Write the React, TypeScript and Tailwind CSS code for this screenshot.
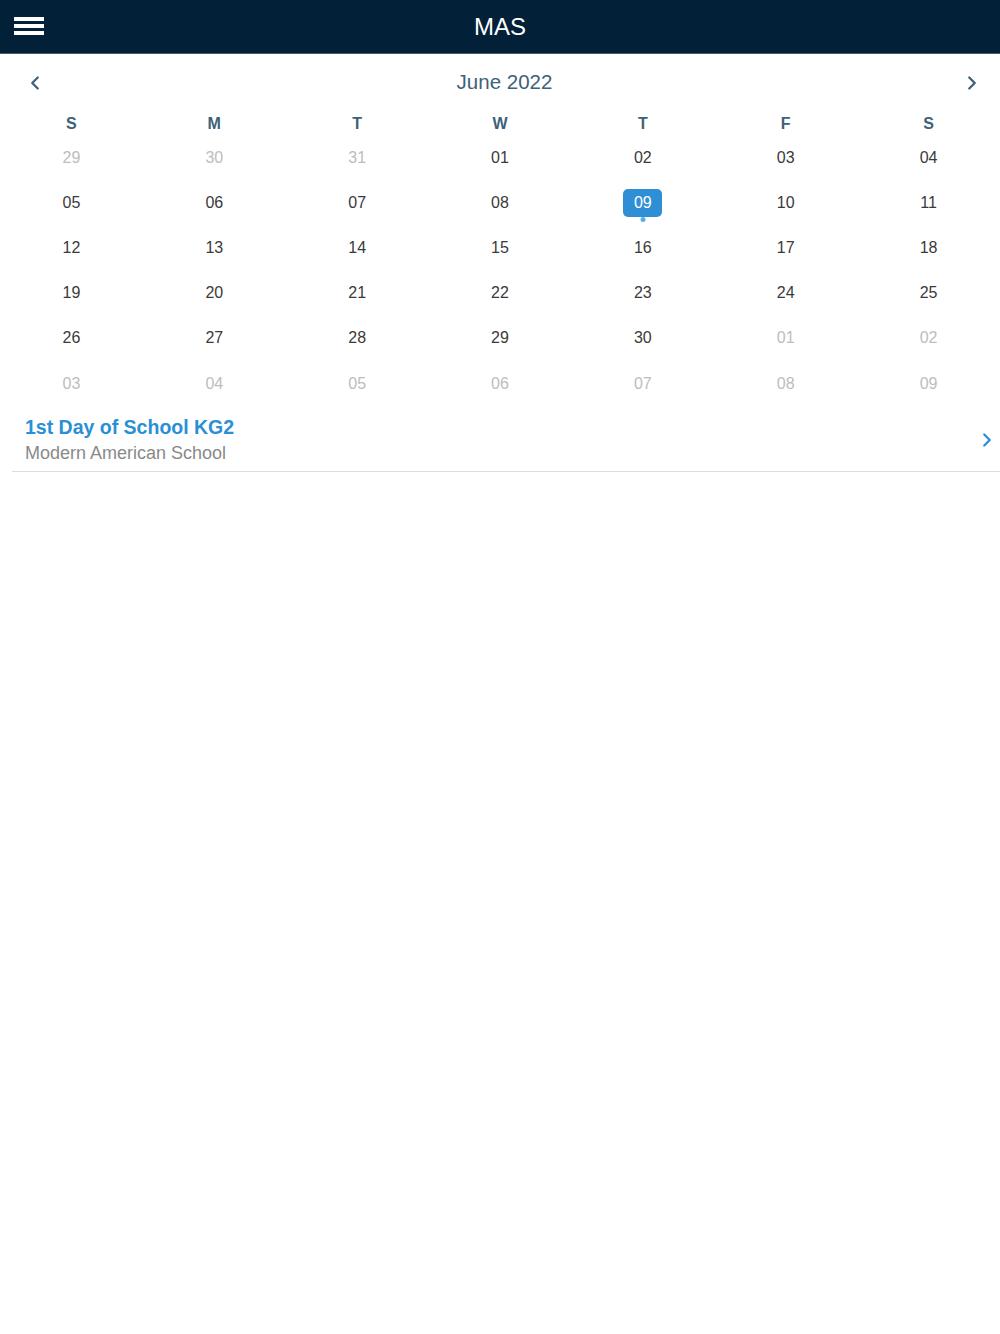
import { ChevronLeft, ChevronRight } from 'lucide-react'

type Day = { label: string; muted?: boolean; selected?: boolean }

const weekdays = ['S', 'M', 'T', 'W', 'T', 'F', 'S']

const pad = (n: number) => (n < 10 ? `0${n}` : `${n}`)

function buildWeeks(): Day[][] {
  const days: Day[] = []
  for (const d of [29, 30, 31]) days.push({ label: pad(d), muted: true })
  for (let d = 1; d <= 30; d++) days.push({ label: pad(d), selected: d === 9 })
  for (let d = 1; d <= 9; d++) days.push({ label: pad(d), muted: true })
  const weeks: Day[][] = []
  for (let i = 0; i < days.length; i += 7) weeks.push(days.slice(i, i + 7))
  return weeks
}

export default function App() {
  const weeks = buildWeeks()

  return (
    <div className="min-h-screen bg-white font-['Liberation_Sans',Arial,sans-serif]">
      {/* Barre du haut */}
      <header className="relative flex h-[54px] items-center justify-center bg-[#022037] border-b border-[#4a5a66]">
        <button className="absolute left-[14px] top-[17px] flex w-[30px] flex-col gap-[3px]">
          <span className="block h-[4px] w-full bg-white" />
          <span className="block h-[4px] w-full bg-white" />
          <span className="block h-[4px] w-full bg-white" />
        </button>
        <h1 className="text-[24px] text-white">MAS</h1>
      </header>

      {/* Mois */}
      <div className="flex h-[57px] items-center justify-between pl-[24px] pr-[17px]">
        <ChevronLeft className="h-[22px] w-[22px] text-[#3e6178]" strokeWidth={2.5} />
        <span className="pl-[2px] text-[20.5px] text-[#3e6178]">June 2022</span>
        <ChevronRight className="h-[22px] w-[22px] text-[#3e6178]" strokeWidth={2.5} />
      </div>

      {/* Jours de la semaine */}
      <div className="grid h-[24px] grid-cols-7 items-center pt-[1px]">
        {weekdays.map((w, i) => (
          <div key={i} className="text-center text-[16px] font-bold text-[#3e6178]">
            {w}
          </div>
        ))}
      </div>

      {/* Grille */}
      <div>
        {weeks.map((week, wi) => (
          <div key={wi} className="grid h-[45.2px] grid-cols-7 items-center">
            {week.map((day, di) => (
              <div key={di} className="flex justify-center">
                {day.selected ? (
                  <div className="relative flex h-[28px] w-[39px] items-center justify-center rounded-[5px] bg-[#2f8fd5] text-[16px] text-white">
                    {day.label}
                    <span className="absolute bottom-[-5px] left-1/2 h-[5px] w-[5px] -translate-x-1/2 rounded-full bg-[#5aaee8]" />
                  </div>
                ) : (
                  <span className={`text-[16px] ${day.muted ? 'text-[#bdbdbd]' : 'text-[#3a3a3a]'}`}>
                    {day.label}
                  </span>
                )}
              </div>
            ))}
          </div>
        ))}
      </div>

      {/* Événement */}
      <div className="ml-[12px] flex items-center justify-between border-b border-[#dddddd] pb-[5px] pl-[13px] pr-[2px] pt-[8px]">
        <div>
          <p className="text-[19.5px] font-bold leading-[27px] text-[#2b8fd6]">1st Day of School KG2</p>
          <p className="text-[18px] leading-[25px] text-[#8a8a8a]">Modern American School</p>
        </div>
        <ChevronRight className="h-[22px] w-[22px] text-[#2b8fd6]" strokeWidth={2.5} />
      </div>
    </div>
  )
}
